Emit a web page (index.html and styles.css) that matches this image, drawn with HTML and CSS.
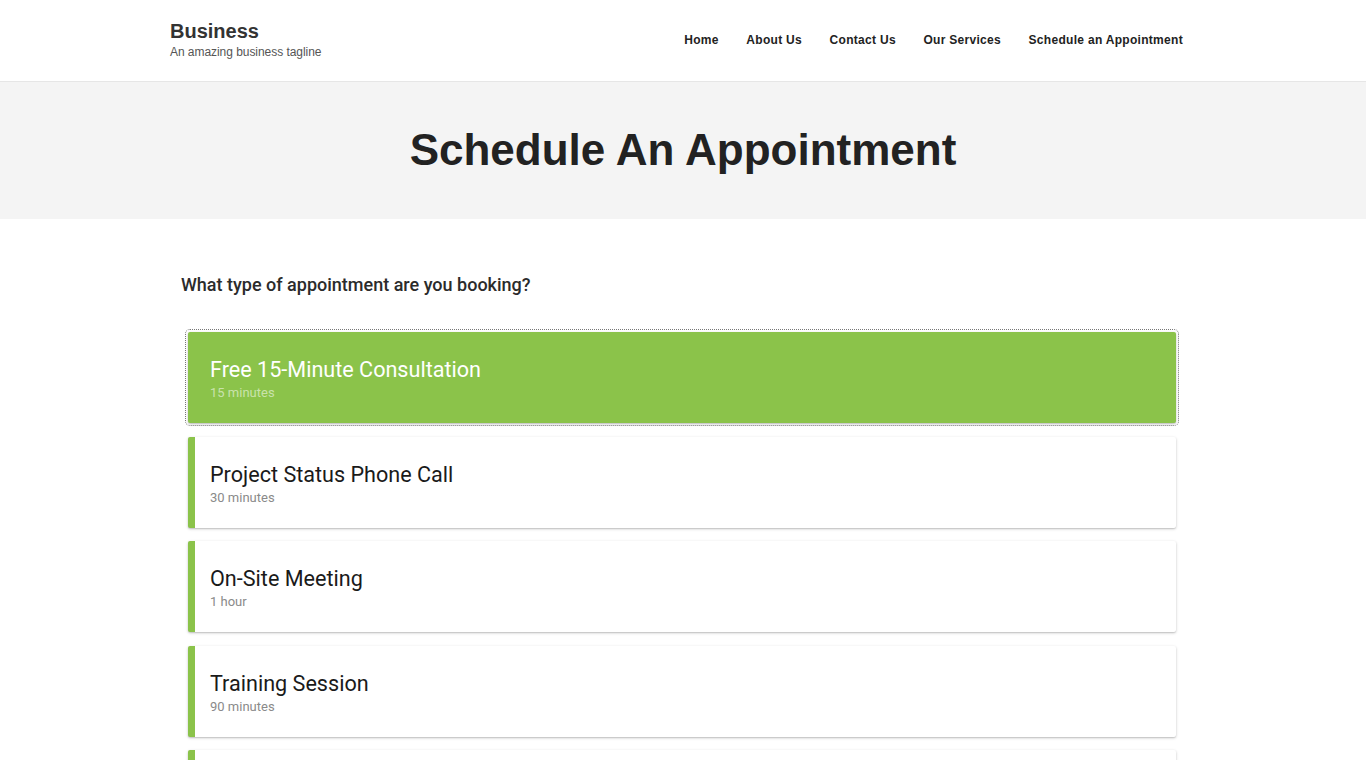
FILE: index.html
```html
<!DOCTYPE html>
<html lang="en">
<head>
<meta charset="utf-8">
<title>Schedule An Appointment</title>
<link rel="stylesheet" href="styles.css">
</head>
<body>
<header class="site-header">
  <div class="container header-inner">
    <div class="brand">
      <div class="brand-name">Business</div>
      <div class="brand-tagline">An amazing business tagline</div>
    </div>
    <nav class="nav">
      <a href="#" class="nav-link">Home</a>
      <a href="#" class="nav-link">About Us</a>
      <a href="#" class="nav-link">Contact Us</a>
      <a href="#" class="nav-link">Our Services</a>
      <a href="#" class="nav-link">Schedule an Appointment</a>
    </nav>
  </div>
</header>
<section class="hero">
  <h1 class="hero-title">Schedule An Appointment</h1>
</section>
<main class="container content">
  <h2 class="question">What type of appointment are you booking?</h2>
  <div class="types">
    <div class="type-card selected">
      <div class="type-title">Free 15-Minute Consultation</div>
      <div class="type-duration">15 minutes</div>
    </div>
    <div class="type-card">
      <div class="type-title">Project Status Phone Call</div>
      <div class="type-duration">30 minutes</div>
    </div>
    <div class="type-card">
      <div class="type-title">On-Site Meeting</div>
      <div class="type-duration">1 hour</div>
    </div>
    <div class="type-card">
      <div class="type-title">Training Session</div>
      <div class="type-duration">90 minutes</div>
    </div>
    <div class="type-card">
      <div class="type-title">Strategy Workshop</div>
      <div class="type-duration">2 hours</div>
    </div>
  </div>
</main>
</body>
</html>
```

FILE: styles.css
```css
* { box-sizing: border-box; }
html, body { margin: 0; padding: 0; background: #fff; }
body { font-family: "Liberation Sans", Arial, sans-serif; color: #333; }

.container { width: 1026px; margin: 0 auto; }

.site-header { height: 82px; border-bottom: 1px solid #e6e6e6; background: #fff; }
.header-inner { height: 81px; display: flex; align-items: flex-start; justify-content: space-between; }
.brand { padding-top: 19px; }
.brand-name { font-size: 20px; font-weight: bold; color: #333; line-height: 24px; }
.brand-tagline { font-size: 12px; color: #555; line-height: 16px; margin-top: 1px; letter-spacing: -0.05px; }
.nav { display: flex; padding-top: 32px; }
.nav-link { padding: 0 13.75px; font-size: 12px; font-weight: bold; letter-spacing: 0.3px; color: #222; text-decoration: none; line-height: 16px; }
.nav-link:last-child { padding-right: 13px; }

.hero { background: #f4f4f4; height: 137px; display: flex; align-items: center; justify-content: center; }
.hero-title { margin: 0; font-size: 44px; font-weight: bold; color: #222; line-height: 52px; padding-bottom: 2px; }

.content { padding: 0 0 40px 11px; }
.question { margin: 0; padding-top: 54px; font-family: Roboto, "Noto Sans", sans-serif; font-weight: 500; font-size: 18px; line-height: 24px; color: #2b2b2b; }
.types { padding: 35px 20px 0 7px; display: flex; flex-direction: column; gap: 13.5px; }

.type-card { background: #fff; border-left: 7px solid #8bc34a; border-radius: 2px; padding: 24px 15px 21px 15px; box-shadow: 0 1px 3px rgba(0,0,0,0.22), 0 1px 1px rgba(0,0,0,0.08); font-family: Roboto, "Noto Sans", sans-serif; }
.type-title { font-size: 21.6px; line-height: 28px; color: #1a1a1a; }
.type-duration { font-size: 13px; line-height: 18px; color: #8a8a8a; }

.type-card.selected { background: #8bc34a; outline: 1px dotted #777; outline-offset: 2px; }
.type-card.selected .type-title { color: #fff; }
.type-card.selected .type-duration { color: rgba(255,255,255,0.55); }
```
